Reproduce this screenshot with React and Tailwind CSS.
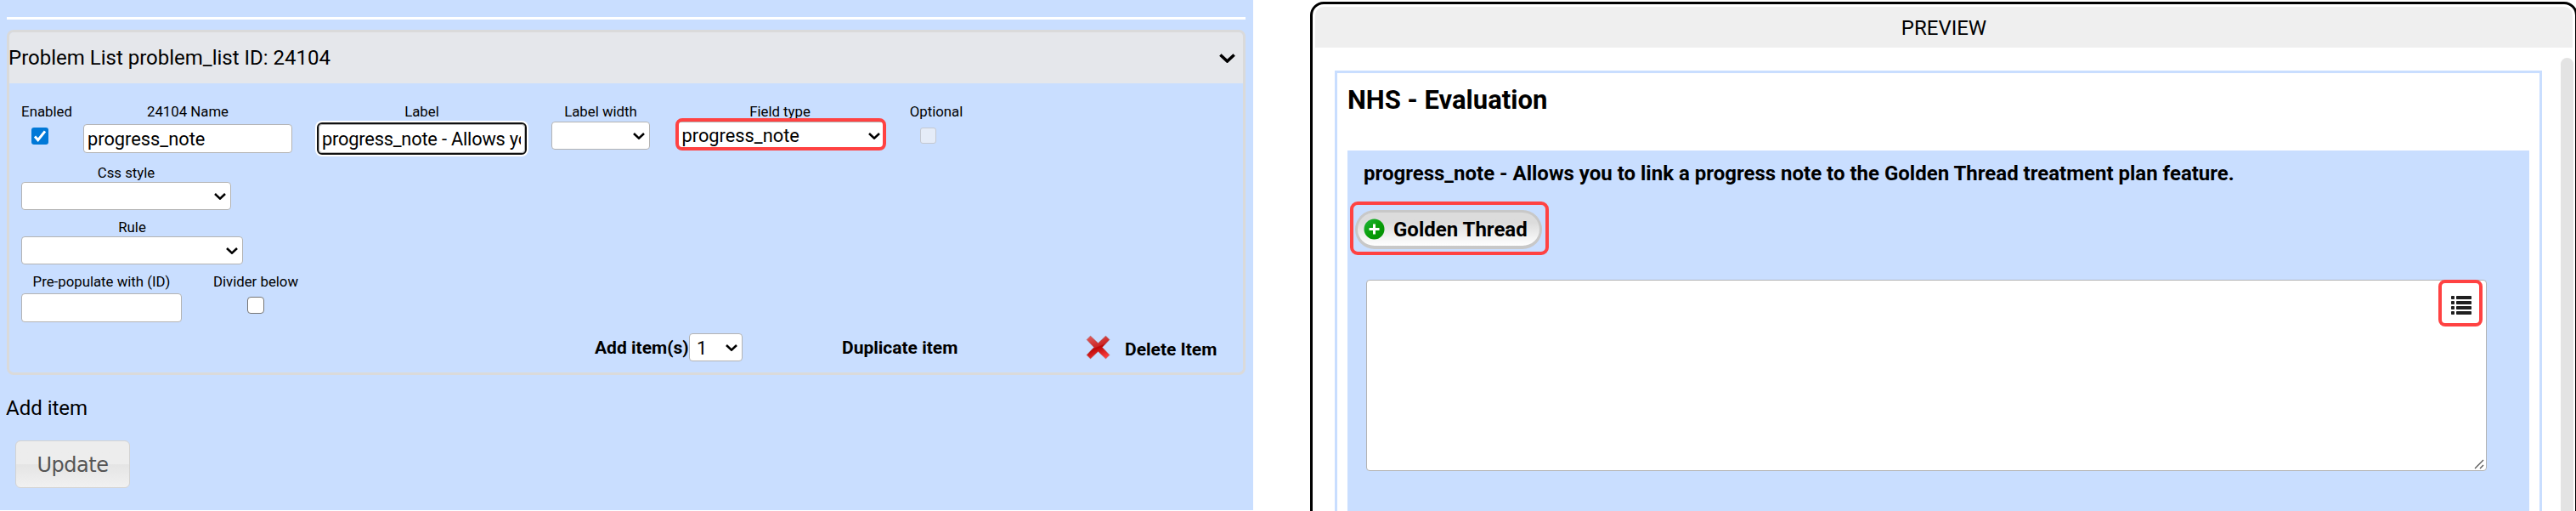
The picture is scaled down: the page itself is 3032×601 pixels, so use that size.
function Chevron({ className, width = 2.6 }) {
  return (
    <svg className={className} viewBox="0 0 14 8" fill="none" stroke="black" strokeWidth={width}>
      <path d="M1 1l6 5.6L13 1" />
    </svg>
  );
}

function Field({ label, className, children }) {
  return (
    <div className={`flex flex-col items-center shrink-0 ${className}`}>
      <span className="text-[16.800px] leading-5 whitespace-nowrap">{label}</span>
      {children}
    </div>
  );
}

function TextInput({ value, className = '' }) {
  return (
    <div className={`h-[34px] w-full rounded border border-[#b3b3b3] bg-white px-1 whitespace-nowrap text-[21.800px] leading-[34px] ${className}`}>
      {value}
    </div>
  );
}

function Select({ value, className = '' }) {
  return (
    <div className={`flex h-[33px] items-center justify-between rounded border border-[#b3b3b3] bg-white pr-[5px] text-[21.800px] ${className}`}>
      <span className="pt-px">{value}</span>
      <Chevron className="h-2 w-3.5 shrink-0" />
    </div>
  );
}

function ItemCard() {
  return (
    <div className="mt-[12px] h-[406px] rounded-lg border-[3px] border-[#dadada] overflow-hidden">
      <div className="flex h-[60px] items-center justify-between bg-[#e5e7eb] pr-[9px] text-2xl">
        <span className="-ml-px">Problem List problem_list ID: 24104</span>
        <Chevron className="h-[11px] w-[19px]" />
      </div>

      <div className="pt-[23px] pl-[14px]">
        <div className="flex h-[72px]">
          <Field label="Enabled" className="w-[60px]">
            <span className="mt-[9px] mr-4 flex size-5 items-center justify-center rounded-[3px] bg-[#0078d7]">
              <svg className="size-4" viewBox="0 0 16 16" fill="none" stroke="white" strokeWidth="3">
                <path d="M2 8.6l3.7 4L14 2.4" />
              </svg>
            </span>
          </Field>
          <Field label="24104 Name" className="ml-[13px] w-[246px]">
            <TextInput value="progress_note" className="mt-[5px]" />
          </Field>
          <Field label="Label" className="ml-[31px] w-[243px]">
            <TextInput
              value={<span className="-ml-px block overflow-hidden tracking-[-0.2px]">progress_note - Allows yo</span>}
              className="mt-[5px] outline-2 outline-[#101010] ring-4 ring-white"
            />
          </Field>
          <Field label="Label width" className="ml-[31px] w-[116px]">
            <Select className="mt-[2px] w-full" />
          </Field>
          <Field label="Field type" className="ml-[30px] w-[246px]">
            <div className="relative mt-[2px] ml-px w-full">
              <Select value="progress_note" className="pl-[6px]" />
              <div className="absolute -top-1 -left-px h-[38px] w-[248px] rounded-lg border-4 border-[#ff4242]" />
            </div>
          </Field>
          <Field label="Optional" className="ml-[30px] w-[62px]">
            <span className="mt-[9px] mr-5 size-[19px] rounded-[3px] border border-[#c4c8d0] bg-[#e5ecf8]" />
          </Field>
        </div>

        <div className="flex h-16">
          <Field label="Css style" className="w-[247px]">
            <Select className="mt-px w-full" />
          </Field>
        </div>
        <div className="flex h-16">
          <Field label="Rule" className="w-[261px]">
            <Select className="mt-px w-full" />
          </Field>
        </div>
        <div className="flex h-[71px]">
          <Field label="Pre-populate with (ID)" className="w-[189px]">
            <TextInput className="mt-1" />
          </Field>
          <Field label="Divider below" className="ml-[37px] w-[100px]">
            <span className="mt-2 size-5 rounded-[4px] border-[1.5px] border-[#767676] bg-white" />
          </Field>
        </div>
      </div>

      <div className="flex h-[34px] pl-[689px] text-[21px] font-bold leading-[35px] whitespace-nowrap">
        <span className="w-[111px]">Add item(s)</span>
        <Select value="1" className="w-[63px] pl-2 font-normal" />
        <span className="ml-[117px] w-[135px]">Duplicate item</span>
        <svg className="ml-[152px] mt-[2px] size-[29px] shrink-0" viewBox="0 0 29 29">
          <defs>
            <linearGradient id="cross" x1="0.3" y1="0" x2="0.7" y2="1">
              <stop offset="0" stopColor="#dd5555" />
              <stop offset="0.45" stopColor="#cc2626" />
              <stop offset="0.5" stopColor="#bd0808" />
              <stop offset="1" stopColor="#ff4040" />
            </linearGradient>
          </defs>
          <path
            d="M5.500 1l9 8.500L23.500 1l4.500 4.500-8.500 9 8.500 9L23.500 28l-9-8.500-9 8.500L1 23.500l8.500-9L1 5.500z"
            fill="url(#cross)"
            stroke="#a08088"
            strokeOpacity="0.5"
          />
        </svg>
        <span className="ml-[17px] pt-[2px]">Delete Item</span>
      </div>
    </div>
  );
}

function Editor() {
  return (
    <div className="flex h-[600px] w-[1475px] shrink-0 flex-col bg-[#c9deff] pt-5 pr-[9px] pl-2">
      <div className="h-[3px] bg-white" />
      <ItemCard />
      <div className="mt-[24px] -ml-px text-2xl leading-[30px]">Add item</div>
      <button className="mt-[23px] ml-[10px] h-14 w-[135px] rounded-md border border-[#d3d3d3] bg-linear-to-b from-[#ededed] from-50% via-[#e4e4e4] via-50% to-[#f1f1f1] pt-px font-['DejaVu_Sans'] text-2xl tracking-[-0.5px] text-[#555]">
        Update
      </button>
    </div>
  );
}

function GoldenThreadButton() {
  return (
    <div className="mt-[18px] ml-[3px] flex h-[63px] w-[234px] rounded-[9px] border-4 border-[#ff4242] pt-[6px] pl-[2px]">
      <button className="flex h-[46px] w-[220px] items-center rounded-full border-[3px] border-b-4 border-[#c8c8c8] bg-linear-to-b from-[#dcdcdc] from-30% to-white pl-[7px] text-2xl font-bold whitespace-nowrap">
        <svg className="size-[25px] shrink-0" viewBox="0 0 25 25">
          <defs>
            <linearGradient id="plus" x1="0" y1="0" x2="1" y2="1">
              <stop offset="0" stopColor="#1fb53c" />
              <stop offset="0.5" stopColor="#0a9f0a" />
              <stop offset="1" stopColor="#008c00" />
            </linearGradient>
          </defs>
          <circle cx="12.500" cy="12.500" r="12" fill="url(#plus)" />
          <path d="M12.500 6.500v12M6.500 12.500h12" stroke="white" strokeWidth="3" />
        </svg>
        <span className="ml-[10px]">Golden Thread</span>
      </button>
    </div>
  );
}

function NoteArea() {
  return (
    <div className="relative mt-[29px] ml-[22px] h-[225px] w-[1319px] rounded border border-[#b3b3b3] bg-white">
      <div className="absolute -top-px right-1 flex h-[55px] w-[52px] items-center justify-center rounded-lg border-4 border-[#ff4242]">
        <svg className="mt-1 ml-0.5 h-[22px] w-6" viewBox="0 0 24 22" fill="#202020">
          {[0, 6, 12, 18].map((y) => (
            <g key={y}>
              <rect x="0" y={y} width="4" height="4" rx="0.8" />
              <rect x="6" y={y} width="18" height="4" rx="0.8" />
            </g>
          ))}
        </svg>
      </div>
      <svg className="absolute right-[2px] bottom-[1px] size-3" viewBox="0 0 12 12" stroke="#555" strokeWidth="1.3">
        <path d="M1 11L11 1M7 11l4-4" />
      </svg>
    </div>
  );
}

function Preview() {
  return (
    <div className="mt-[2px] ml-[67px] flex h-[640px] w-[1492px] shrink-0 flex-col rounded-2xl border-[3px] border-black p-[3px]">
      <div className="h-12 shrink-0 rounded-t-[10px] bg-[#efefef] text-center text-2xl leading-[50px]">PREVIEW</div>
      <div className="flex grow">
        <div className="mt-[27px] ml-[23px] w-[1421px] shrink-0 border-[3px] border-[#c9deff] px-3">
          <h2 className="mt-[14px] text-[31px] leading-9 font-bold">NHS - Evaluation</h2>
          <div className="mt-[41px] h-[480px] bg-[#c9deff] pt-[12px]">
            <div className="pl-[19px] text-2xl leading-[30px] font-bold whitespace-nowrap">
              progress_note - Allows you to link a progress note to the Golden Thread treatment plan feature.
            </div>
            <GoldenThreadButton />
            <NoteArea />
          </div>
        </div>
        <div className="mt-3 ml-[22px] w-[15px] shrink-0 rounded-t-full bg-[#e3e3e3]" />
      </div>
    </div>
  );
}

export default function App() {
  return (
    <div className="flex h-[601px] w-[3032px] overflow-hidden bg-white font-[Roboto,sans-serif] text-black">
      <Editor />
      <Preview />
    </div>
  );
}
